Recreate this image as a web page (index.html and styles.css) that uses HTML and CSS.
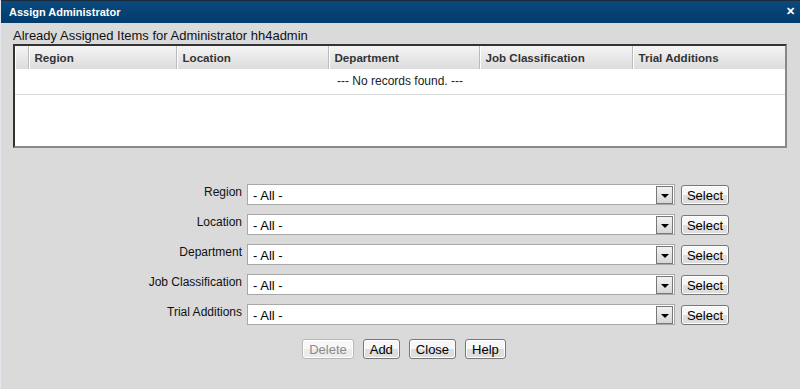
FILE: index.html
```html
<!DOCTYPE html>
<html lang="en">
<head>
    <meta charset="UTF-8">
    <title>Assign Administrator</title>
    <link rel="stylesheet" href="styles.css">
</head>
<body>

    <div class="dialog">
        <div class="titlebar">
            <span class="title">Assign Administrator</span>
            <span class="close">&#x2715;</span>
        </div>

        <div class="content">
            <div class="caption">Already Assigned Items for Administrator hh4admin</div>

            <div class="grid">
                <table>
                    <thead>
                        <tr>
                            <th class="sel"></th>
                            <th class="c1">Region</th>
                            <th class="c2">Location</th>
                            <th class="c3">Department</th>
                            <th class="c4">Job Classification</th>
                            <th>Trial Additions</th>
                        </tr>
                    </thead>
                    <tbody>
                        <tr>
                            <td colspan="6" class="empty">--- No records found. ---</td>
                        </tr>
                    </tbody>
                </table>
            </div>

            <div class="form">
                <label>Region</label>
                <div class="combo"><span>- All -</span><i class="arrow"></i></div>
                <button class="btn">Select</button>

                <label>Location</label>
                <div class="combo"><span>- All -</span><i class="arrow"></i></div>
                <button class="btn">Select</button>

                <label>Department</label>
                <div class="combo"><span>- All -</span><i class="arrow"></i></div>
                <button class="btn">Select</button>

                <label>Job Classification</label>
                <div class="combo"><span>- All -</span><i class="arrow"></i></div>
                <button class="btn">Select</button>

                <label>Trial Additions</label>
                <div class="combo"><span>- All -</span><i class="arrow"></i></div>
                <button class="btn">Select</button>
            </div>

            <div class="actions">
                <button class="btn" disabled>Delete</button>
                <button class="btn">Add</button>
                <button class="btn">Close</button>
                <button class="btn">Help</button>
            </div>
        </div>
    </div>

</body>
</html>
```

FILE: styles.css
```css
body {
    margin: 0;
    background: #dadada;
    font-family: "Liberation Sans", Arial, sans-serif;
    color: #000;
}

.dialog {
    width: 800px;
    height: 389px;
    background: #dadada;
    border-left: 1px solid #e4e8ee;
    box-sizing: border-box;
}

/* title bar */
.titlebar {
    height: 23px;
    background: linear-gradient(#0b4a7e, #003b6c);
    border-top: 1px solid #1a2a3a;
    box-sizing: border-box;
    display: flex;
    align-items: center;
    justify-content: space-between;
    padding: 0 5px 1px 8px;
}

.title {
    color: #fff;
    font-weight: bold;
    font-size: 11px;
}

.close {
    color: #fff;
    font-weight: bold;
    font-size: 11px;
}

.content {
    padding: 4px 13px 0 12px;
}

.caption {
    font-size: 13px;
    height: 17px;
    line-height: 17px;
    color: #111;
}

/* grid */
.grid {
    background: #fff;
    height: 100px;
    border-top: 2px solid #333;
    border-left: 2px solid #333;
    border-right: 2px solid #888;
    border-bottom: 2px solid #888;
}

table {
    width: 100%;
    border-collapse: collapse;
    table-layout: fixed;
}

th {
    height: 23px;
    padding: 0 0 0 6px;
    text-align: left;
    font-size: 11.6px;
    font-weight: bold;
    color: #333;
    background: linear-gradient(#f4f4f4, #dcdcdc);
    border-right: 1px solid #bbb;
    box-shadow: inset 1px 0 0 #fff;
    box-sizing: border-box;
}

th:last-child {
    border-right: none;
}

th.sel { width: 13px; padding: 0; }
th.c1 { width: 148px; }
th.c2 { width: 152px; }
th.c3 { width: 151px; }
th.c4 { width: 153px; }

td.empty {
    height: 25px;
    padding: 0;
    text-align: center;
    font-size: 12px;
    color: #222;
    border-bottom: 1px solid #dcdcdc;
    box-sizing: border-box;
}

/* form */
.form {
    display: grid;
    grid-template-columns: 229px 428px 49px;
    column-gap: 5px;
    row-gap: 9px;
    margin-top: 36px;
}

.form label {
    text-align: right;
    font-size: 12px;
    color: #111;
    line-height: 16px;
}

.combo {
    height: 21px;
    background: #fff;
    border: 1px solid #a8a8a8;
    box-sizing: border-box;
    display: flex;
    align-items: center;
    justify-content: space-between;
    padding: 0 1px 0 5px;
    font-size: 13px;
}

.combo span {
    padding-top: 2px;
}

.arrow {
    width: 15px;
    height: 16px;
    border: 1px solid #777;
    background: linear-gradient(#f2f2f2, #d6d6d6);
    position: relative;
}

.arrow::after {
    content: "";
    position: absolute;
    left: 4px;
    top: 7px;
    border-left: 4px solid transparent;
    border-right: 4px solid transparent;
    border-top: 4px solid #000;
}

.btn {
    height: 20px;
    padding: 0 6px;
    font-family: "Liberation Sans", Arial, sans-serif;
    font-size: 13px;
    color: #000;
    background: linear-gradient(#f7f7f7 50%, #dedede 50%);
    border: 1px solid #777;
    border-radius: 3px;
    box-shadow: inset 0 0 0 1px #fff;
    margin-top: 1px;
}

.form .btn {
    margin-left: 1px;
    padding: 0;
}

.btn:disabled {
    color: #8a8a8a;
    border-color: #b8b8b8;
    background: linear-gradient(#f7f7f7 50%, #ececec 50%);
}

.actions {
    display: flex;
    justify-content: center;
    gap: 9px;
    margin-top: 13px;
    padding-left: 8px;
}
```
